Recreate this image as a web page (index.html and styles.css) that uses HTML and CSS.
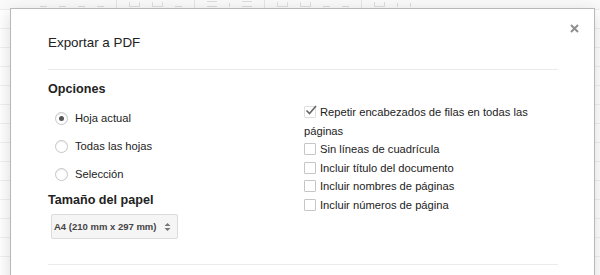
FILE: index.html
```html
<!DOCTYPE html>
<html lang="es">
<head>
  <meta charset="UTF-8">
  <title>Exportar a PDF</title>
  <link rel="stylesheet" href="styles.css">
</head>
<body>
  <div class="sheet">
    <div class="toolbar">
      <i class="tb"></i><i class="tb"></i><i class="tb"></i><i class="tb"></i>
      <i class="sep"></i>
      <i class="tb box"></i><i class="tb box"></i><i class="tb"></i>
      <i class="sep"></i>
      <i class="tb lines"></i><i class="tb thin"></i><i class="tb lines"></i>
      <i class="sep"></i>
      <i class="tb box"></i><i class="tb box"></i><i class="tb"></i><i class="tb"></i>
      <i class="sep"></i>
      <i class="tb box"></i><i class="tb thin"></i><i class="tb thin"></i>
    </div>
    <div class="grid"></div>
  </div>

  <div class="dialog">
    <button class="close" aria-label="Cerrar">
      <svg width="9" height="9" viewBox="0 0 9 9"><path d="M1 1L8 8M8 1L1 8" stroke="#8f8f8f" stroke-width="2"/></svg>
    </button>
    <div class="title">Exportar a PDF</div>

    <div class="content">
      <div class="col-left">
        <div class="heading">Opciones</div>
        <div class="radios">
          <label class="radio-row"><span class="radio checked"></span>Hoja actual</label>
          <label class="radio-row"><span class="radio"></span>Todas las hojas</label>
          <label class="radio-row"><span class="radio"></span>Selección</label>
        </div>
        <div class="heading paper">Tamaño del papel</div>
        <div class="select">
          <span>A4 (210 mm x 297 mm)</span>
          <svg class="arrows" width="7" height="10" viewBox="0 0 7 10"><path d="M0.5 4L3.5 1L6.5 4Z M0.5 6L3.5 9L6.5 6Z" fill="#777"/></svg>
        </div>
      </div>

      <div class="col-right">
        <div class="check-row">
          <span class="checkbox checked"><svg width="12" height="10" viewBox="0 0 12 10"><path d="M1.5 5.5L4.5 8.5L11 1" stroke="#666" stroke-width="1.6" fill="none"/></svg></span>Repetir encabezados de filas en todas las páginas
        </div>
        <div class="check-row"><span class="checkbox"></span>Sin líneas de cuadrícula</div>
        <div class="check-row"><span class="checkbox"></span>Incluir título del documento</div>
        <div class="check-row"><span class="checkbox"></span>Incluir nombres de páginas</div>
        <div class="check-row"><span class="checkbox"></span>Incluir números de página</div>
      </div>
    </div>

    <div class="footer-line"></div>
  </div>
</body>
</html>
```

FILE: styles.css
```css
body {
  margin: 0;
  width: 600px;
  height: 275px;
  overflow: hidden;
  font-family: 'Liberation Sans', Arial, sans-serif;
  color: #222;
  background-color: #fff;
  position: relative;
}

.sheet {
  height: 100%;
}

.toolbar {
  height: 9px;
  overflow: hidden;
  display: flex;
  align-items: flex-end;
  gap: 12px;
  padding-left: 40px;
  background-color: #fafafa;
  border-bottom: 1px solid #eee;
}

.toolbar .tb {
  width: 7px;
  height: 4px;
  border-bottom: 1px solid #dadada;
  margin-bottom: 2px;
}

.toolbar .box {
  width: 9px;
  border: 1px solid #dedede;
  border-top: none;
}

.toolbar .lines {
  width: 10px;
  border-top: 1px solid #dedede;
}

.toolbar .thin {
  width: 1px;
  border: none;
  background-color: #dadada;
}

.toolbar .sep {
  width: 1px;
  height: 9px;
  background-color: #e6e6e6;
}

.grid {
  height: calc(100% - 10px);
  background-image: repeating-linear-gradient(to bottom, #fff 0, #fff 18px, #f0f0f0 18px, #f0f0f0 19px);
}

.dialog {
  position: absolute;
  left: 10px;
  top: 8px;
  width: 510px;
  height: 300px;
  padding: 0 36px 0 37px;
  background-color: #fff;
  border: 1px solid #b8b8b8;
  box-shadow: 0 4px 16px rgba(0, 0, 0, 0.15);
}

.close {
  position: absolute;
  top: 15px;
  right: 15px;
  width: 9px;
  height: 9px;
  padding: 0;
  border: none;
  background: none;
  display: flex;
}

.title {
  padding-top: 24px;
  padding-bottom: 16px;
  font-size: 13.4px;
  line-height: 20px;
  color: #222;
  border-bottom: 1px solid #ebebeb;
}

.content {
  display: grid;
  grid-template-columns: 256px 1fr;
}

.heading {
  margin-top: 11px;
  font-size: 12.6px;
  line-height: 16px;
  font-weight: bold;
  color: #222;
}

.radios {
  margin-top: 7px;
}

.radio-row {
  display: flex;
  align-items: center;
  height: 28px;
  padding-left: 7px;
  font-size: 11.2px;
}

.radio {
  width: 11px;
  height: 11px;
  margin-right: 7px;
  border: 1px solid #c6c6c6;
  border-radius: 50%;
  background-color: #fff;
  box-shadow: inset 0 1px 1px rgba(0, 0, 0, 0.08);
  display: flex;
  align-items: center;
  justify-content: center;
}

.radio.checked::after {
  content: "";
  width: 5px;
  height: 5px;
  border-radius: 50%;
  background-color: #555;
}

.heading.paper {
  margin-top: 4px;
}

.select {
  margin-top: 6px;
  margin-left: 3px;
  width: 123px;
  height: 23px;
  display: flex;
  align-items: center;
  justify-content: space-between;
  padding-left: 2px;
  border: 1px solid #dcdcdc;
  border-radius: 2px;
  background-color: #f5f5f5;
  font-size: 9.5px;
  font-weight: bold;
  color: #444;
  white-space: nowrap;
}

.select .arrows {
  margin-right: 6px;
}

.col-right {
  padding-top: 33px;
  font-size: 11.2px;
  line-height: 18.6px;
}

.checkbox {
  display: inline-block;
  position: relative;
  width: 10px;
  height: 10px;
  margin-right: 4px;
  vertical-align: -2px;
  border: 1px solid #c6c6c6;
  border-radius: 1px;
  background-color: #fff;
}

.checkbox.checked {
  border-color: #e0e0e0;
}

.checkbox svg {
  position: absolute;
  left: 0;
  top: -2px;
}

.footer-line {
  margin-top: 25px;
  border-top: 1px solid #ebebeb;
}
```
